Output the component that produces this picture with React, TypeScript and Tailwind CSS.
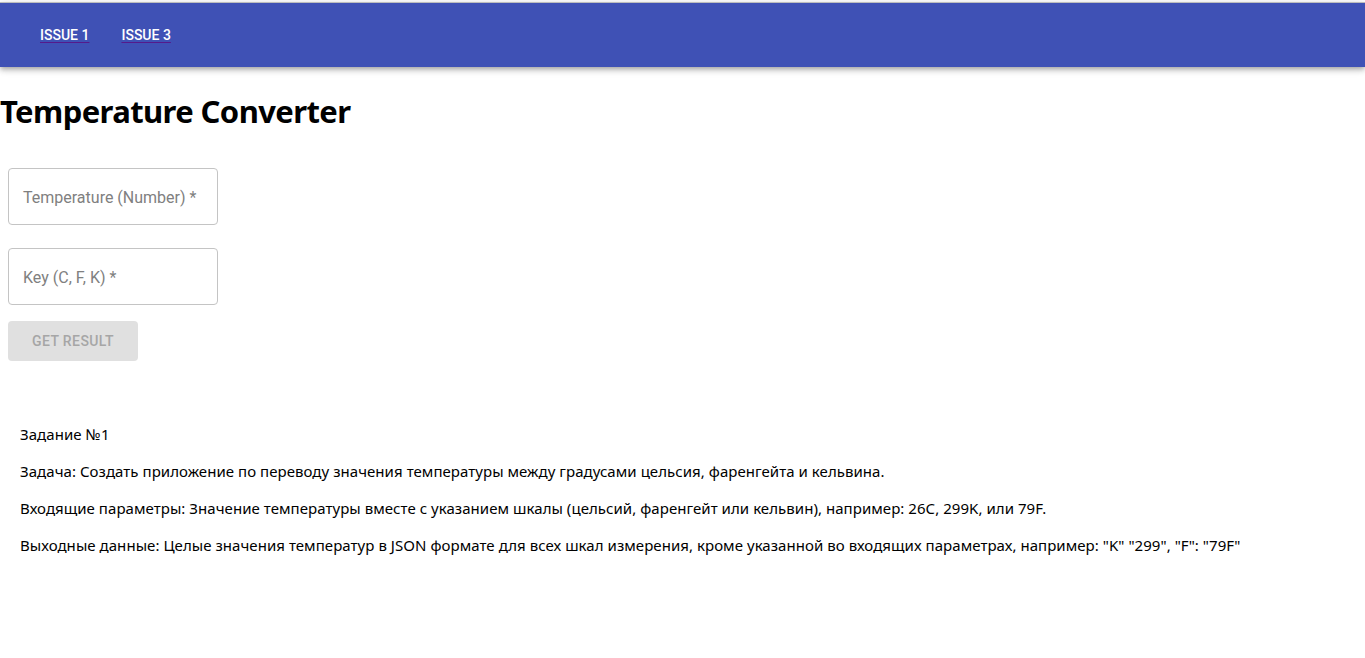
import React from "react";

const roboto = { fontFamily: "Roboto, 'Liberation Sans', sans-serif" };

function NavLink({ label }: { label: string }) {
  return (
    <a
      href="#"
      className="px-4 py-[6px] text-[14px] font-medium uppercase leading-[24px] text-white underline decoration-[#551a8b] underline-offset-[2px]"
    >
      {label}
    </a>
  );
}

function OutlinedField({ label }: { label: string }) {
  return (
    <div className="flex h-[57px] w-[210px] items-center rounded-[4px] border border-[#c4c4c4] px-[14px] pt-[3px]">
      <span className="text-[16px] text-[#808080]" style={roboto}>
        {label}
      </span>
    </div>
  );
}

export default function App() {
  const lines = [
    "Задание №1",
    "Задача: Создать приложение по переводу значения температуры между градусами цельсия, фаренгейта и кельвина.",
    "Входящие параметры: Значение температуры вместе с указанием шкалы (цельсий, фаренгейт или кельвин), например: 26C, 299K, или 79F.",
    'Выходные данные: Целые значения температур в JSON формате для всех шкал измерения, кроме указанной во входящих параметрах, например: "K" "299", "F": "79F"',
  ];

  return (
    <div className="min-h-screen bg-white text-black pt-[2px]" style={{ fontFamily: "'Noto Sans', 'Open Sans', sans-serif" }}>
      <header className="border-t border-[#bdbdbd] bg-[#3f51b5] shadow-[0_2px_4px_-1px_rgba(0,0,0,0.2),0_4px_5px_0_rgba(0,0,0,0.14),0_1px_10px_0_rgba(0,0,0,0.12)]">
        <nav className="flex h-[64px] items-center px-6" style={roboto}>
          <NavLink label="Issue 1" />
          <NavLink label="Issue 3" />
        </nav>
      </header>

      <h1 className="mt-[24px] text-[31px] font-bold leading-[40px] tracking-[-0.6px]">Temperature Converter</h1>

      <form className="mt-[37px] flex flex-col items-start gap-[23px] pl-2">
        <OutlinedField label="Temperature (Number) *" />
        <OutlinedField label="Key (C, F, K) *" />
        <button
          type="button"
          disabled
          className="-mt-[7px] h-[40px] rounded-[4px] bg-[#e0e0e0] px-6 text-[14px] font-medium uppercase tracking-[0.4px] text-[#a6a6a6]"
          style={roboto}
        >
          Get result
        </button>
      </form>

      <div className="mt-[63px] flex flex-col gap-[17px] px-5 text-[15px] leading-[20px] tracking-[0.05px]">
        {lines.map((line) => (
          <p key={line}>{line}</p>
        ))}
      </div>
    </div>
  );
}
